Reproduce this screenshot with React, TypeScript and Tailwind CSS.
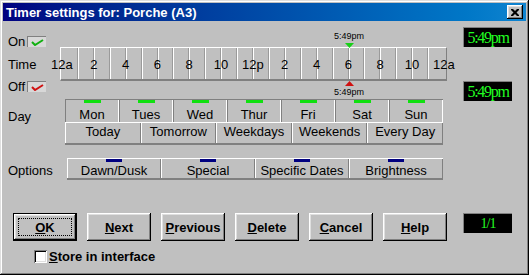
import React from 'react';

const hours = ['12a', '2', '4', '6', '8', '10', '12p', '2', '4', '6', '8', '10', '12a'];
const days = ['Mon', 'Tues', 'Wed', 'Thur', 'Fri', 'Sat', 'Sun'];
const ranges = ['Today', 'Tomorrow', 'Weekdays', 'Weekends', 'Every Day'];
const options = ['Dawn/Dusk', 'Special', 'Specific Dates', 'Brightness'];
const buttons = ['OK', 'Next', 'Previous', 'Delete', 'Cancel', 'Help'];

// classic win98 bevels
const raised =
  'shadow-[inset_-1px_-1px_#000,inset_1px_1px_#fff,inset_-2px_-2px_#808080,inset_2px_2px_#dfdfdf]';
const sunken =
  'shadow-[inset_1px_1px_#808080,inset_-1px_-1px_#fff,inset_2px_2px_#000,inset_-2px_-2px_#dfdfdf]';

const Lcd: React.FC<{ text: string; small?: boolean }> = ({ text, small }) => (
  <div className="w-[49px] h-[20px] bg-black border-t border-l border-[#808080] border-r-white border-b-white flex items-center justify-center overflow-hidden">
    <span
      className={`font-['Liberation_Serif',serif] text-[#22ff22] leading-none ${
        small ? 'text-[14px] tracking-[-1px]' : 'text-[16px] tracking-[-1.3px]'
      }`}
    >
      {text}
    </span>
  </div>
);

const CheckBox: React.FC<{ color: string }> = ({ color }) => (
  <span className="w-[19px] h-[11px] bg-[#d8d8d8] border-t border-l border-[#808080] border-r-white border-b-white flex items-center justify-center">
    <svg width="13" height="7" viewBox="0 0 13 7">
      <polyline points="1,3 4,6 12,1" fill="none" stroke={color} strokeWidth="2" />
    </svg>
  </span>
);

const Marker: React.FC<{ up?: boolean }> = ({ up }) => {
  const tri = up ? (
    <svg width="9" height="5" viewBox="0 0 9 5">
      <polygon points="0,5 4.5,0 9,5" fill="#d01010" />
    </svg>
  ) : (
    <svg width="9" height="5" viewBox="0 0 9 5">
      <polygon points="0,0 9,0 4.5,5" fill="#18d018" />
    </svg>
  );
  return (
    <div className={`absolute left-[331px] w-[30px] flex flex-col items-center ${up ? 'top-[60px]' : 'top-[10px]'}`}>
      {up && tri}
      <span className={`text-[9px] leading-[10px] whitespace-nowrap ${up ? 'mt-[1px]' : 'mb-[2px]'}`}>5:49pm</span>
      {!up && tri}
    </div>
  );
};

const App: React.FC = () => {
  return (
    <div className="w-[529px] h-[275px] p-[3px] bg-[#c0c0c0] flex flex-col overflow-hidden font-['Liberation_Sans',Arial,sans-serif] text-black shadow-[inset_-1px_-1px_#000,inset_1px_1px_#dfdfdf,inset_-2px_-2px_#808080,inset_2px_2px_#fff]">
      {/* Title bar */}
      <div className="h-[18px] shrink-0 flex items-center justify-between pl-[3px] pr-[3px] bg-gradient-to-r from-[#000080] to-[#1084d0]">
        <span className="text-white font-bold text-[13px] leading-none">Timer settings for: Porche (A3)</span>
        <button className={`w-[16px] h-[14px] bg-[#c0c0c0] flex items-center justify-center ${raised}`}>
          <svg width="8" height="7" viewBox="0 0 8 7">
            <path d="M0 0h2l2 2 2-2h2v1L5.5 3.5 8 6v1H6L4 5 2 7H0V6l2.5-2.5L0 1z" fill="#000" />
          </svg>
        </button>
      </div>

      {/* Timeline section */}
      <div className="h-[78px] shrink-0 flex items-start">
        <div className="relative w-[460px]">
          <div className="mt-[10px] h-[16px] flex items-end pl-[5px] text-[13px]">
            <span className="leading-[15px] mb-[-2px]">On</span>
            <span className="ml-[2px]">
              <CheckBox color="#10b010" />
            </span>
          </div>

          <div className="grid h-[34px]">
            <div className="col-start-1 row-start-1 ml-[57px] w-[387px] h-[34px] border-t border-l border-white border-r border-r-[#808080] border-b-2 border-b-[#808080]">
              <svg width="385" height="31" className="block">
                {Array.from({ length: 23 }, (_, i) => {
                  const x = Math.round(1 + 15.917 * (i + 1));
                  return (
                    <g key={i}>
                      <rect x={x - 1} y={0} width={1} height={31} fill="#9a9a9a" />
                      <rect x={x} y={0} width={1} height={31} fill="#fff" />
                    </g>
                  );
                })}
              </svg>
            </div>
            <div className="col-start-1 row-start-1 flex items-center pl-[5px] text-[13px] leading-[15px]">Time</div>
            <div className="col-start-1 row-start-1 ml-[43px] flex text-[13px] leading-[15px]">
              {hours.map((h, i) => (
                <div key={i} className="w-[31.83px] h-[34px] flex items-center justify-center">
                  {h}
                </div>
              ))}
            </div>
          </div>

          <div className="h-[14px] flex items-start pl-[5px] text-[13px]">
            <span className="leading-[15px] mt-[-2px]">Off</span>
            <span className="ml-[2px]">
              <CheckBox color="#d01010" />
            </span>
          </div>

          <Marker />
          <Marker up />
        </div>
        <div className="w-[49px] flex flex-col pt-[6px]">
          <Lcd text="5:49pm" />
          <div className="mt-[34px]">
            <Lcd text="5:49pm" />
          </div>
        </div>
      </div>

      {/* Day section */}
      <div className="flex shrink-0 text-[13px]">
        <div className="w-[62px] pl-[5px] pt-[10px] leading-[15px]">Day</div>
        <div className="w-[378px] flex flex-col">
          <div className="flex h-[23px] border-t border-[#808080]">
            {days.map((d) => (
              <div key={d} className="flex-1 flex flex-col items-center border-l border-l-[#808080] border-r border-r-white">
                <div className="w-[17px] h-[3px] bg-[#10e010]" />
                <span className="mt-[5px] leading-[14px]">{d}</span>
              </div>
            ))}
          </div>
          <div className="flex h-[23px] border-t border-white border-b-2 border-b-[#808080]">
            {ranges.map((r) => (
              <div key={r} className="flex-1 flex justify-center pt-[1px] leading-[15px] border-l border-l-white border-r border-r-[#808080]">
                {r}
              </div>
            ))}
          </div>
        </div>
      </div>

      {/* Options section */}
      <div className="flex shrink-0 mt-[13px] text-[13px]">
        <div className="w-[64px] pl-[5px] pt-[5px] leading-[15px]">Options</div>
        <div className="w-[376px] h-[22px] flex border-t border-white border-b-2 border-b-[#808080]">
          {options.map((o) => (
            <div key={o} className="flex-1 flex flex-col items-center border-l border-l-white border-r border-r-[#808080]">
              <div className="w-[16px] h-[3px] bg-[#000080]" />
              <span className="mt-[1px] leading-[15px]">{o}</span>
            </div>
          ))}
        </div>
      </div>

      {/* Buttons */}
      <div className="flex items-start shrink-0 mt-[33px] pl-[10px]">
        <div className="flex gap-[10px]">
          {buttons.map((b, i) => (
            <button
              key={b}
              className={`w-[64px] h-[28px] bg-[#c0c0c0] text-[13px] font-bold leading-none flex items-center justify-center ${
                i === 0 ? 'border border-black' : ''
              } ${raised}`}
            >
              {i === 0 ? (
                <span className="w-[54px] h-[18px] border border-dotted border-black flex items-center justify-center">
                  <span className="underline">{b[0]}</span>
                  {b.slice(1)}
                </span>
              ) : (
                <span>
                  <span className="underline">{b[0]}</span>
                  {b.slice(1)}
                </span>
              )}
            </button>
          ))}
        </div>
        <div className="ml-[16px]">
          <Lcd text="1/1" small />
        </div>
      </div>

      {/* Store checkbox */}
      <div className="flex items-center shrink-0 mt-[8px] pl-[31px]">
        <span className={`w-[13px] h-[13px] bg-white ${sunken}`} />
        <span className="ml-[2px] text-[13px] font-bold leading-[15px]">
          <span className="underline">S</span>tore in interface
        </span>
      </div>
    </div>
  );
};

export default App;
